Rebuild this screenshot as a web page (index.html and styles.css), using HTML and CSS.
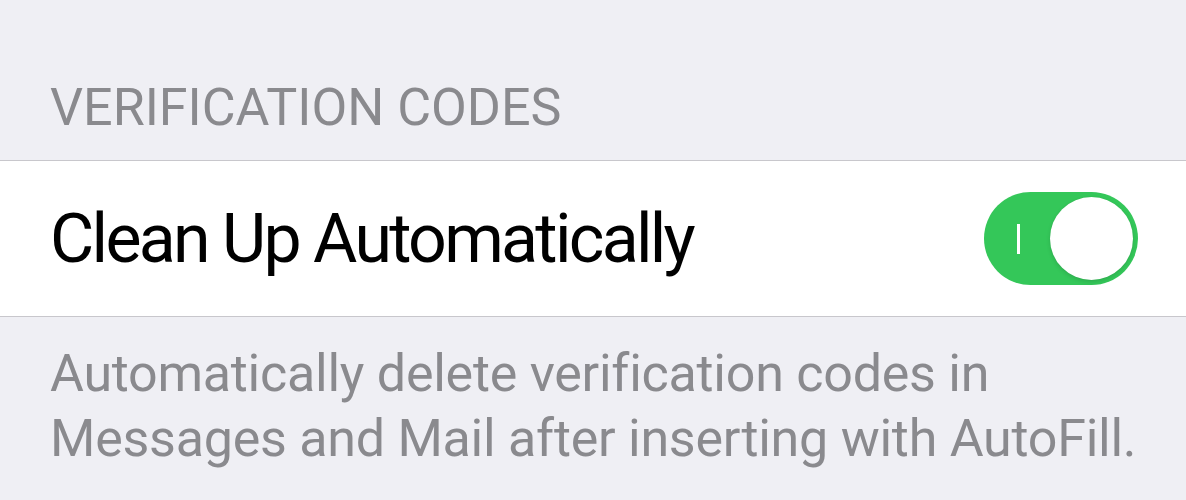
FILE: index.html
```html
<!DOCTYPE html>
<html>
<head>
<meta charset="utf-8">
<link rel="stylesheet" href="styles.css">
</head>
<body>
<div class="page">
  <div class="section-header">VERIFICATION CODES</div>
  <div class="group">
    <div class="row">
      <span class="row-label">Clean Up Automatically</span>
      <div class="switch on">
        <span class="switch-mark"></span>
        <span class="switch-knob"></span>
      </div>
    </div>
  </div>
  <div class="section-footer">
    <div class="footer-line">Automatically delete verification codes in</div>
    <div class="footer-line">Messages and Mail after inserting with AutoFill.</div>
  </div>
</div>
</body>
</html>
```
FILE: styles.css
```css
html, body {
  margin: 0;
  padding: 0;
  background: #efeff4;
}
body {
  width: 1186px;
  height: 500px;
  overflow: hidden;
  font-family: Roboto, "Liberation Sans", sans-serif;
}
.page {
  display: flex;
  flex-direction: column;
}
.section-header {
  height: 160px;
  box-sizing: border-box;
  padding: 0 50px;
  display: flex;
  align-items: flex-end;
  padding-bottom: 26px;
  font-size: 52px;
  line-height: 1;
  color: #8a8a8e;
}
.group {
  background: #fff;
  border-top: 1px solid #c8c7cc;
  border-bottom: 1px solid #c8c7cc;
}
.row {
  height: 155px;
  display: flex;
  align-items: center;
  justify-content: space-between;
  padding: 0 48px 0 50px;
}
.row-label {
  font-size: 68px;
  letter-spacing: -2.7px;
  color: #000;
}
.switch {
  position: relative;
  width: 154px;
  height: 93px;
  border-radius: 47px;
  background: #34c759;
  flex: none;
}
.switch-mark {
  position: absolute;
  left: 33px;
  top: 32px;
  width: 3px;
  height: 30px;
  background: #fff;
}
.switch-knob {
  position: absolute;
  right: 5px;
  top: 5px;
  width: 83px;
  height: 83px;
  border-radius: 50%;
  background: #fff;
  box-shadow: 0 2px 4px rgba(0,0,0,0.12), 0 0 1px rgba(0,0,0,0.1);
}
.section-footer {
  padding: 24px 50px 0;
  font-size: 52px;
  line-height: 65px;
  color: #8a8a8e;
  letter-spacing: -0.25px;
}
.footer-line {
  white-space: nowrap;
}
```
